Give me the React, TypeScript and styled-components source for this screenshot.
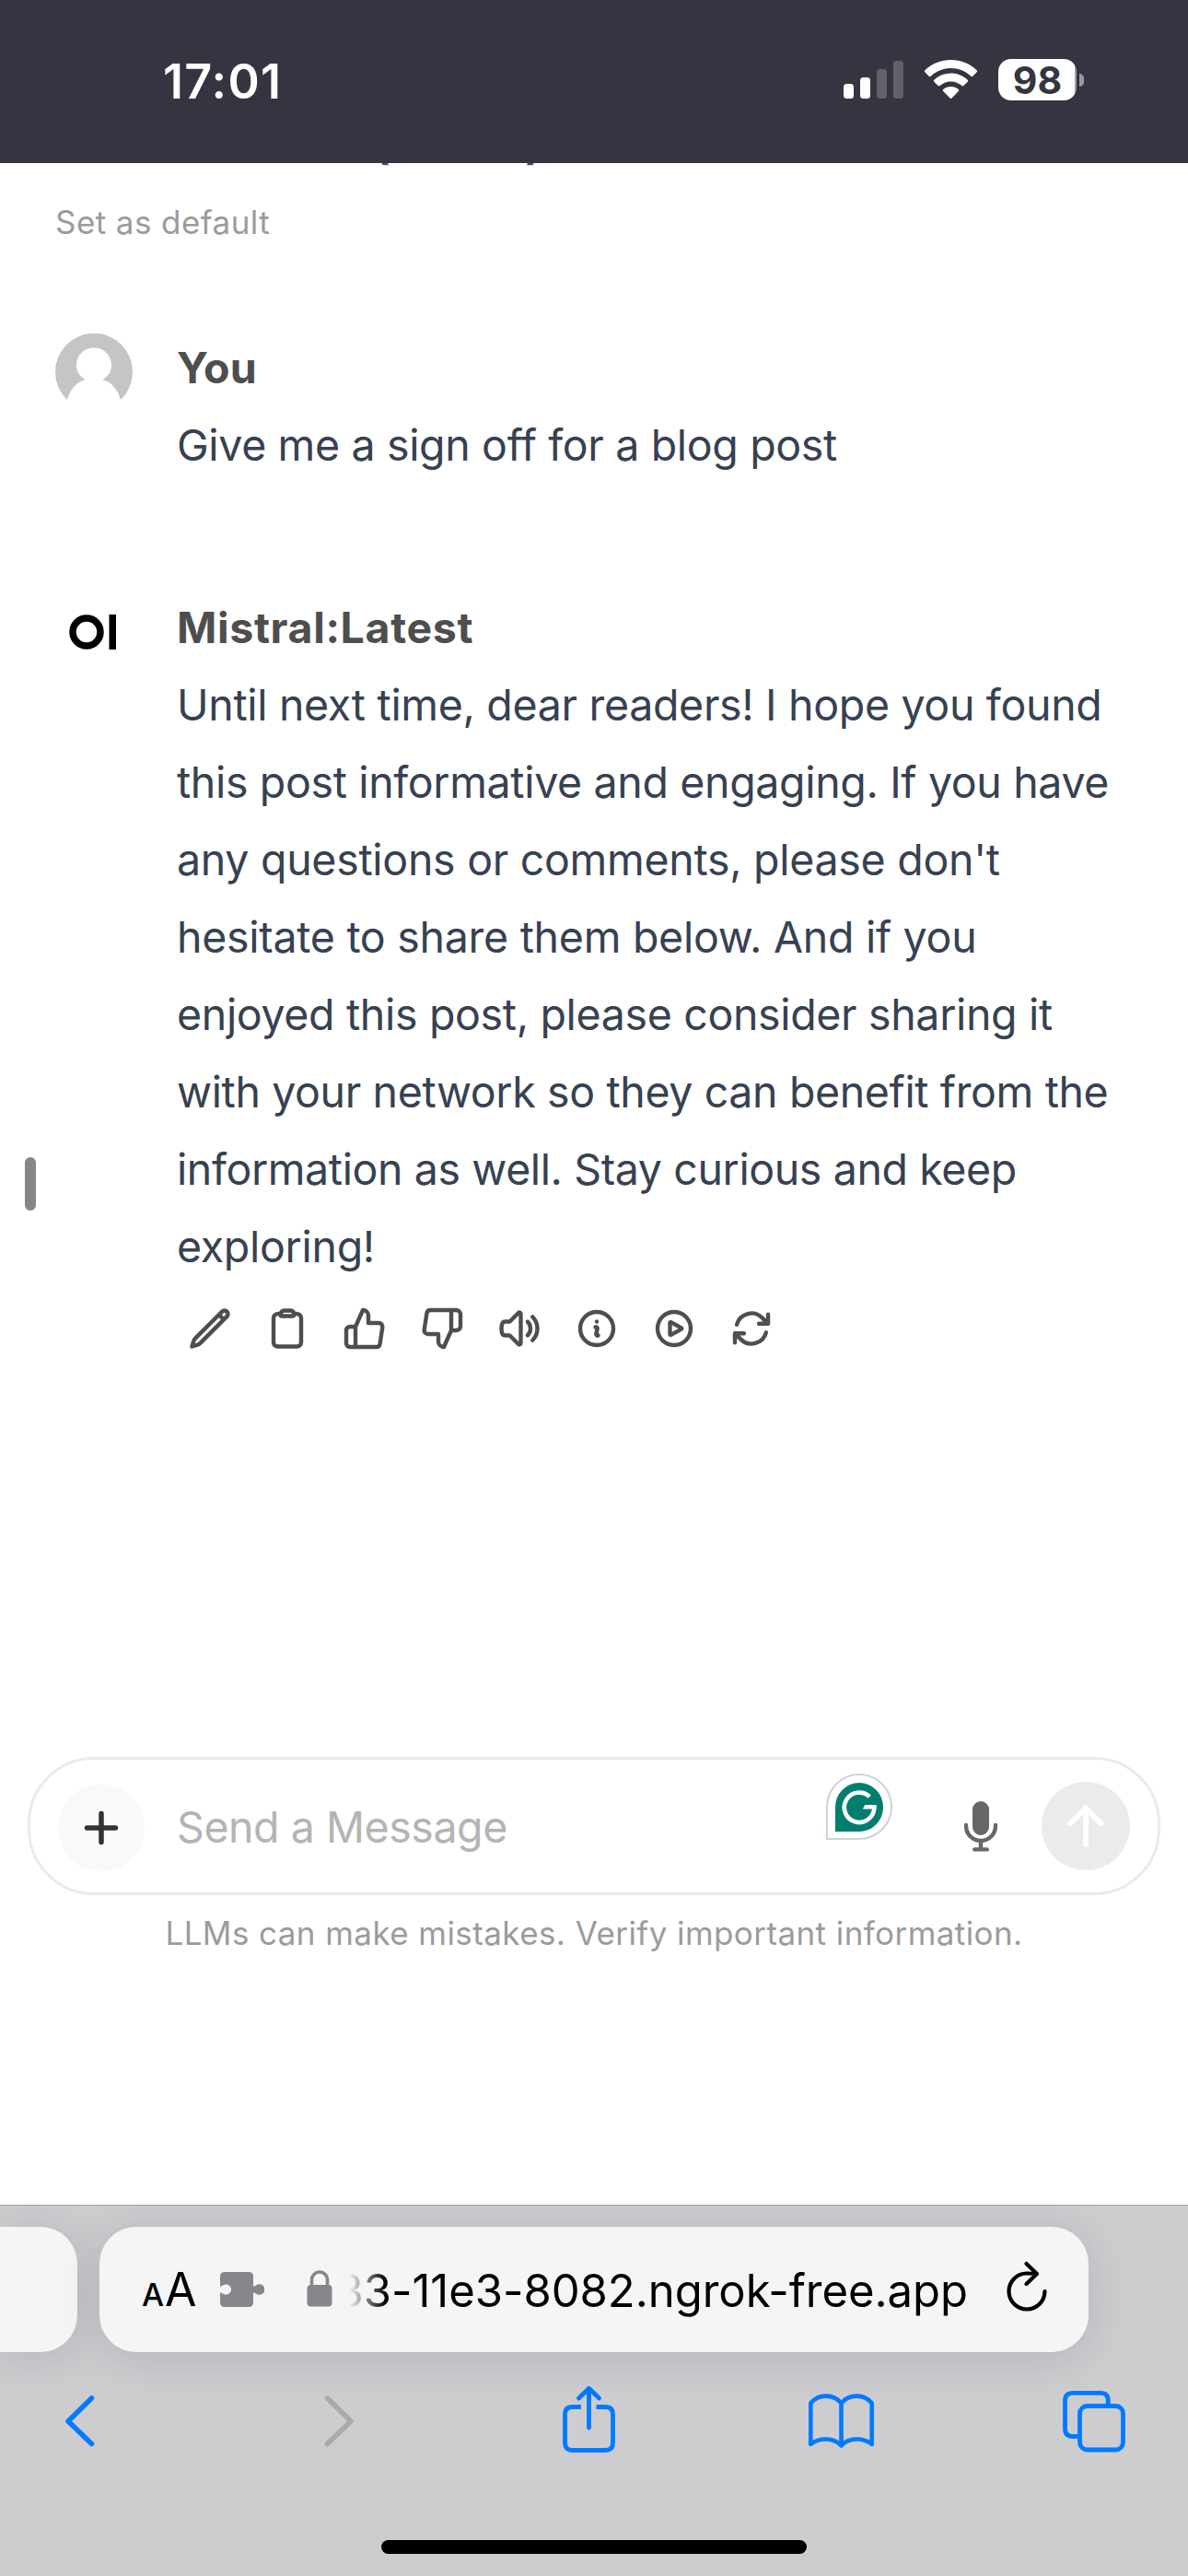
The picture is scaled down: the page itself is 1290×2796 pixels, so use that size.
import React from "react";
import styled, { createGlobalStyle } from "styled-components";

const Global = createGlobalStyle`
  * { box-sizing: border-box; }
  body { margin: 0; background: #fff; }
  svg { display: block; flex: none; }
`;

const Phone = styled.div`
  position: relative;
  width: 1290px;
  height: 2796px;
  display: flex;
  flex-direction: column;
  overflow: hidden;
  background: #fff;
  font-family: Inter, "Liberation Sans", sans-serif;
`;

/* ---------- status bar ---------- */

const StatusBar = styled.header`
  flex: none;
  height: 177px;
  padding: 62px 113px 0 177px;
  display: flex;
  justify-content: space-between;
  align-items: flex-start;
  background: #353541;
  color: #fff;
`;

const Clock = styled.time`
  font-size: 52px;
  line-height: 54px;
  font-weight: 600;
  letter-spacing: 1.2px;
`;

const StatusIcons = styled.div`
  display: flex;
  padding-top: 2px;
`;

const Signal = styled.div`
  display: flex;
  align-items: flex-end;
  gap: 7px;
  height: 43px;
  margin-right: 23px;
`;

const SignalBar = styled.i<{ $height: number; $on?: boolean }>`
  width: 11px;
  height: ${(p) => p.$height}px;
  border-radius: 3.5px;
  background: ${(p) => (p.$on ? "#fff" : "#62616b")};
`;

const Battery = styled.div`
  margin-left: 23px;
  display: flex;
  align-items: center;
  height: 45px;
`;

const BatteryBody = styled.div`
  width: 85px;
  height: 45px;
  border-radius: 14px;
  background: linear-gradient(90deg, #fff 83px, #a2a2a8 83px);
  color: #353541;
  font-size: 41px;
  line-height: 46px;
  font-weight: 700;
  text-align: center;
`;

const BatteryTip = styled.i`
  width: 5px;
  height: 14px;
  margin-left: 3px;
  border-radius: 0 5px 5px 0;
  background: #9a9aa0;
`;

/* ---------- conversation ---------- */

const Chat = styled.main`
  flex: 1;
  display: flex;
  flex-direction: column;
`;

const ScrolledModelName = styled.div`
  height: 43px;
  padding-left: 406px;
  display: flex;
  gap: 147px;
  overflow: hidden;
  color: #4e4e4e;
  font-size: 46.5px;
  line-height: 46.5px;
  font-weight: 700;

  span { margin-top: -44px; }
`;

const DefaultLink = styled.div`
  padding-left: 60px;
  margin-bottom: 95px;
  font-size: 35px;
  line-height: 42px;
  letter-spacing: 0.42px;
  color: #9b9b9b;
`;

const Message = styled.article`
  display: flex;
  gap: 48px;
  padding-left: 60px;
  margin-bottom: 114px;
`;

const Avatar = styled.div`
  width: 84px;
  height: 84px;
  margin-top: 5px;
`;

const MessageBody = styled.div`
  font-size: 46.5px;
  line-height: 84px;
  color: #374151;
`;

const Author = styled.div<{ $spacing: number }>`
  font-weight: 700;
  font-size: 46.5px;
  letter-spacing: ${(p) => p.$spacing}px;
  color: #4e4e4e;
`;

const Line = styled.span<{ $spacing: number }>`
  display: block;
  white-space: nowrap;
  letter-spacing: ${(p) => p.$spacing}px;
`;

const Actions = styled.div`
  display: flex;
  gap: 36px;
  padding: 23px 0 0 12px;
`;

const Grabber = styled.i`
  position: absolute;
  left: 27px;
  top: 1256px;
  width: 12px;
  height: 58px;
  border-radius: 6px;
  background: #868686;
`;

/* ---------- composer ---------- */

const ComposerArea = styled.div`
  margin-top: auto;
  height: 486px;
  padding: 0 30px;
`;

const Composer = styled.div`
  position: relative;
  height: 150px;
  border: 3px solid #ebebeb;
  border-radius: 72px;
  padding: 0 30px;
  display: flex;
  align-items: center;
`;

const PlusButton = styled.div`
  width: 94px;
  height: 94px;
  margin-top: 4px;
  border-radius: 50%;
  background: #f9f9f9;
  display: grid;
  place-items: center;
`;

const Placeholder = styled.div`
  flex: 1;
  padding-left: 35px;
  margin-top: 2px;
  font-size: 46.5px;
  line-height: 60px;
  letter-spacing: -0.45px;
  color: #b4b4b4;
`;

const SendButton = styled.div`
  width: 96px;
  height: 96px;
  margin-left: 48px;
  border-radius: 50%;
  background: #ebebeb;
  display: grid;
  place-items: center;
`;

const WritingBadge = styled.div`
  position: absolute;
  left: 864px;
  top: 15px;
  width: 72px;
  height: 72px;
  border: 2px solid #cdd0df;
  border-radius: 50% 50% 50% 0;
  background: #fff;
  display: grid;
  place-items: center;
`;

const Disclaimer = styled.p`
  margin: 20px 0 0;
  font-size: 35px;
  line-height: 42px;
  letter-spacing: 0.42px;
  text-align: center;
  color: #9b9b9b;
`;

/* ---------- browser chrome ---------- */

const BrowserBar = styled.footer`
  flex: none;
  height: 403px;
  border-top: 1px solid #9e9da3;
  background: #cdcdd0;
  display: flex;
  flex-direction: column;
  overflow: hidden;
`;

const TabStrip = styled.div`
  display: flex;
  gap: 24px;
  padding-top: 23px;
`;

const NeighbourTab = styled.div`
  width: 84px;
  height: 136px;
  border-radius: 0 40px 40px 0;
  background: #f5f5f5;
  box-shadow: 0 6px 48px rgba(20, 10, 40, 0.13);
`;

const AddressBar = styled.div`
  position: relative;
  width: 1074px;
  height: 136px;
  padding-left: 46px;
  border-radius: 40px;
  background: #f5f5f5;
  box-shadow: 0 6px 48px rgba(20, 10, 40, 0.13);
  display: flex;
  align-items: center;
`;

const TextSize = styled.div`
  width: 85px;
  display: flex;
  align-items: baseline;
  gap: 2px;
  line-height: 60px;
  margin-top: 5px;
`;

const Glyph = styled.span<{ $size: number; $weight: number }>`
  font-size: ${(p) => p.$size}px;
  font-weight: ${(p) => p.$weight};
  letter-spacing: -1px;
`;

const LockSlot = styled.div`
  margin: -2px 18px 0 46px;
`;

const Address = styled.div`
  width: 672px;
  margin-top: 4px;
  display: flex;
  justify-content: flex-end;
  overflow: hidden;
  white-space: nowrap;
  font-size: 49px;
  line-height: 64px;
  letter-spacing: -0.04px;
  color: #000;
  mask-image: linear-gradient(90deg, transparent 0, #000 40px);
`;

const ReloadSlot = styled.div`
  margin: -8px 0 0 40px;
`;

const NavRow = styled.nav`
  display: flex;
  gap: 195px;
  padding: 27px 0 0 46px;
`;

const HomeIndicator = styled.i`
  width: 462px;
  height: 15px;
  margin: 81px auto 0;
  border-radius: 8px;
  background: #000;
`;

const ACTION_ICONS: string[][] = [
  ["M16.862 4.487l1.687-1.688a1.875 1.875 0 112.652 2.652L6.832 19.82a4.5 4.5 0 01-1.897 1.13l-2.685.8.8-2.685a4.5 4.5 0 011.13-1.897L16.863 4.487zm0 0L19.5 7.125"],
  ["M15.666 3.888A2.25 2.25 0 0013.5 2.25h-3c-1.03 0-1.9.693-2.166 1.638m7.332 0c.055.194.084.4.084.612v0a.75.75 0 01-.75.75H9a.75.75 0 01-.75-.75v0c0-.212.03-.418.084-.612m7.332 0c.646.049 1.288.11 1.927.184 1.1.128 1.907 1.077 1.907 2.185V19.5a2.25 2.25 0 01-2.25 2.25H6.75A2.25 2.25 0 014.5 19.5V6.257c0-1.108.806-2.057 1.907-2.185a48.208 48.208 0 011.927-.184"],
  ["M14 9V5a3 3 0 0 0-3-3l-4 9v11h11.28a2 2 0 0 0 2-1.7l1.38-9a2 2 0 0 0-2-2.3zM7 22H4a2 2 0 0 1-2-2v-7a2 2 0 0 1 2-2h3"],
  ["M10 15v4a3 3 0 0 0 3 3l4-9V2H5.72a2 2 0 0 0-2 1.7l-1.38 9a2 2 0 0 0 2 2.3zm7-13h2.67A2.31 2.31 0 0 1 22 4v7a2.31 2.31 0 0 1-2.33 2H17"],
  ["M19.114 5.636a9 9 0 010 12.728M16.463 8.288a5.25 5.25 0 010 7.424M6.75 8.25l4.72-4.72a.75.75 0 011.28.53v15.88a.75.75 0 01-1.28.53l-4.72-4.72H4.51c-.88 0-1.704-.507-1.938-1.354A9.01 9.01 0 012.25 12c0-.83.112-1.633.322-2.396C2.806 8.756 3.63 8.25 4.51 8.25H6.75z"],
  ["M11.25 11.25l.041-.02a.75.75 0 011.063.852l-.708 2.836a.75.75 0 001.063.853l.041-.021M21 12a9 9 0 11-18 0 9 9 0 0118 0zm-9-3.75h.008v.008H12V8.25z"],
  ["M21 12a9 9 0 11-18 0 9 9 0 0118 0z", "M15.91 11.672a.375.375 0 010 .656l-5.603 3.113a.375.375 0 01-.557-.328V8.887c0-.286.307-.466.557-.327l5.603 3.112z"],
  ["M16.023 9.348h4.992v-.001M2.985 19.644v-4.992m0 0h4.992m-4.993 0l3.181 3.183a8.25 8.25 0 0013.803-3.7M4.031 9.865a8.25 8.25 0 0113.803-3.7l3.181 3.182m0-4.991v4.99"],
];

const REPLY: [string, number][] = [
  ["Until next time, dear readers! I hope you found", -0.32],
  ["this post informative and engaging. If you have", -0.35],
  ["any questions or comments, please don't", -0.29],
  ["hesitate to share them below. And if you", -0.28],
  ["enjoyed this post, please consider sharing it", -0.34],
  ["with your network so they can benefit from the", -0.37],
  ["information as well. Stay curious and keep", -0.39],
  ["exploring!", -0.3],
];

const WifiIcon = () => (
  <svg width="57" height="43" viewBox="0 0 57 43" fill="#fff">
    <path d="M28.5 1C39.500 1 49.500 5.200 56.600 12.300C57.200 12.900 57.200 13.700 56.600 14.300L52.300 18.700C51.700 19.300 50.900 19.300 50.300 18.700C44.500 13.200 36.900 10 28.500 10S12.500 13.200 6.700 18.700C6.100 19.300 5.300 19.300 4.700 18.700L0.400 14.300C-0.200 13.700-0.200 12.900 0.400 12.300C7.500 5.200 17.500 1 28.500 1Z" />
    <path d="M28.500 15.500C35.600 15.500 42 18.200 46.700 22.700C47.300 23.300 47.300 24.100 46.700 24.700L42.400 29C41.800 29.600 41 29.600 40.400 29.100C37.200 26.200 33.100 24.500 28.500 24.500S19.800 26.200 16.600 29.100C16 29.600 15.200 29.600 14.600 29L10.300 24.700C9.700 24.100 9.700 23.300 10.300 22.700C15 18.200 21.400 15.500 28.500 15.500Z" />
    <path d="M28.500 30C31.700 30 34.600 31.200 36.800 33.100C37.400 33.700 37.400 34.500 36.800 35.100L29.500 42.500C28.900 43.100 28.100 43.100 27.500 42.500L20.200 35.100C19.600 34.500 19.600 33.700 20.200 33.100C22.400 31.200 25.300 30 28.500 30Z" />
  </svg>
);

export default function App() {
  return (
    <Phone>
      <Global />
      <StatusBar>
        <Clock>17:01</Clock>
        <StatusIcons>
          <Signal>
            <SignalBar $height={16} $on />
            <SignalBar $height={23} $on />
            <SignalBar $height={32} />
            <SignalBar $height={41} />
          </Signal>
          <WifiIcon />
          <Battery>
            <BatteryBody>98</BatteryBody>
            <BatteryTip />
          </Battery>
        </StatusIcons>
      </StatusBar>

      <Chat>
        <ScrolledModelName>
          <span>(</span>
          <span>)</span>
        </ScrolledModelName>
        <DefaultLink>Set as default</DefaultLink>

        <Message>
          <Avatar>
            <svg width="84" height="84" viewBox="0 0 84 84">
              <path d="M13 72A42 42 0 1 1 71 72C68 61 62 53.500 51.500 50C57.500 46.500 61 41 61 34.500C61 23.500 53 15.500 42 15.500S23 23.500 23 34.500C23 41 26.500 46.500 32.500 50C22 53.500 16 61 13 72Z" fill="#c5c5c5" />
            </svg>
          </Avatar>
          <MessageBody>
            <Author $spacing={0.2}>You</Author>
            <Line $spacing={-0.35}>Give me a sign off for a blog post</Line>
          </MessageBody>
        </Message>

        <Message>
          <Avatar>
            <svg width="84" height="84" viewBox="0 0 84 84">
              <circle cx="34" cy="42" r="15" fill="none" stroke="#000" strokeWidth="7.500" />
              <rect x="58.500" y="23" width="7.500" height="38" />
            </svg>
          </Avatar>
          <MessageBody>
            <Author $spacing={0.65}>Mistral:Latest</Author>
            {REPLY.map(([text, spacing]) => (
              <Line key={text} $spacing={spacing}>{text}</Line>
            ))}
            <Actions>
              {ACTION_ICONS.map((paths) => (
                <svg key={paths[paths.length - 1]} width="48" height="48" viewBox="0 0 24 24" fill="none" stroke="#4e4e4e" strokeWidth="2.200" strokeLinecap="round" strokeLinejoin="round">
                  {paths.map((d) => <path key={d} d={d} />)}
                </svg>
              ))}
            </Actions>
          </MessageBody>
        </Message>

        <ComposerArea>
          <Composer>
            <PlusButton>
              <svg width="40" height="40" viewBox="0 0 40 40" stroke="#333" strokeWidth="5.500" strokeLinecap="round">
                <path d="M20 4.500V35.500M4.500 20H35.500" />
              </svg>
            </PlusButton>
            <Placeholder>Send a Message</Placeholder>
            <svg width="36" height="56" viewBox="0 0 36 56">
              <rect x="9" y="1" width="18" height="37" rx="9" fill="#676767" />
              <path d="M2 27V28A16 16 0 0 0 34 28V27M18 44V53M11.200 53.400H24.800" fill="none" stroke="#676767" strokeWidth="4.400" strokeLinecap="round" />
            </svg>
            <SendButton>
              <svg width="48" height="48" viewBox="0 0 48 48" fill="none" stroke="#fff" strokeWidth="6" strokeLinecap="round" strokeLinejoin="round">
                <path d="M24 43.500V4.500M7.500 21L24 4.500L40.500 21" />
              </svg>
            </SendButton>
            <WritingBadge>
              <svg width="52" height="53" viewBox="0 0 52 53">
                <path d="M0 26.500A26 26.500 0 1 1 26 53H0Z" fill="#027e6f" />
                <path d="M37.300 15.200A16.200 16.200 0 1 0 42.200 26.500" fill="none" stroke="#fff" strokeWidth="4.600" />
                <path d="M32.200 24.100H44.600V28.400H29.800Z" fill="#fff" />
              </svg>
            </WritingBadge>
          </Composer>
          <Disclaimer>LLMs can make mistakes. Verify important information.</Disclaimer>
        </ComposerArea>
      </Chat>
      <Grabber />

      <BrowserBar>
        <TabStrip>
          <NeighbourTab />
          <AddressBar>
            <TextSize>
              <Glyph $size={34} $weight={500}>A</Glyph>
              <Glyph $size={50} $weight={400}>A</Glyph>
            </TextSize>
            <svg width="48" height="40" viewBox="0 0 48 40" fill="#87868b">
              <path d="M5 1H31Q36 1 36 6V16.500Q38 16.500 39 15.400A5.800 5.800 0 1 1 39 24.600Q38 23.500 36 23.500V34Q36 39 31 39H5Q0 39 0 34V23.500Q2 23.500 3 24.400A5.600 5.600 0 1 0 3 15.600Q2 16.500 0 16.500V6Q0 1 5 1Z" />
            </svg>
            <LockSlot>
              <svg width="28" height="40" viewBox="-0.500 0 28 40">
                <rect x="0" y="16" width="27" height="23.500" rx="4" fill="#87868b" />
                <path d="M5 18V10.500A8.500 8.500 0 0 1 22 10.500V18" fill="none" stroke="#87868b" strokeWidth="3.600" />
              </svg>
            </LockSlot>
            <Address>33-11e3-8082.ngrok-free.app</Address>
            <ReloadSlot>
              <svg width="48" height="60" viewBox="0 0 48 60" fill="none" stroke="#000" strokeWidth="4.200" strokeLinecap="round" strokeLinejoin="round">
                <path d="M43.500 36A19.500 19.500 0 1 1 24 16.500Q30 16.500 35 17M23.500 6L35 17L23.500 28" />
              </svg>
            </ReloadSlot>
          </AddressBar>
        </TabStrip>

        <NavRow>
          <svg width="80" height="96" viewBox="46 2580 80 96" fill="none" stroke="#007aff" strokeWidth="5.500" strokeLinecap="round" strokeLinejoin="round">
            <path d="M99.500 2603L74 2628L99.500 2652.500" />
          </svg>
          <svg width="80" height="96" viewBox="321 2580 80 96" fill="none" stroke="#a9a9ab" strokeWidth="5.500" strokeLinecap="round" strokeLinejoin="round">
            <path d="M355.500 2603L381 2628L355.500 2652.500" />
          </svg>
          <svg width="80" height="96" viewBox="596 2580 80 96" fill="none" stroke="#007aff" strokeWidth="4.800">
            <path d="M631 2612.500H621.500Q613.500 2612.500 613.500 2620.500V2651.500Q613.500 2659.500 621.500 2659.500H657.500Q665.500 2659.500 665.500 2651.500V2620.500Q665.500 2612.500 657.500 2612.500H647.500" />
            <path d="M639.500 2635V2592.500M628.500 2603L639.500 2592.200L650.500 2603" strokeLinecap="round" strokeLinejoin="round" />
          </svg>
          <svg width="80" height="96" viewBox="871 2580 80 96" fill="none" stroke="#007aff" strokeWidth="4.600" strokeLinejoin="round">
            <path d="M913.500 2608.500C905 2598 888.500 2598 880.300 2608.500V2653C890 2645.500 905 2645.500 913.500 2654.500C922 2645.500 937 2645.500 946.700 2653V2608.500C938.500 2598 922 2598 913.500 2608.500ZV2654.500" />
          </svg>
          <svg width="80" height="96" viewBox="1146 2580 80 96" fill="none" stroke="#007aff" strokeWidth="4.800">
            <path d="M1203.300 2609V2605.500Q1203.300 2597.300 1195 2597.300H1165Q1156.500 2597.300 1156.500 2605.500V2636Q1156.500 2644.500 1165 2644.500H1170" />
            <rect x="1172.500" y="2611.500" width="47" height="47.500" rx="8" />
          </svg>
        </NavRow>
        <HomeIndicator />
      </BrowserBar>
    </Phone>
  );
}
